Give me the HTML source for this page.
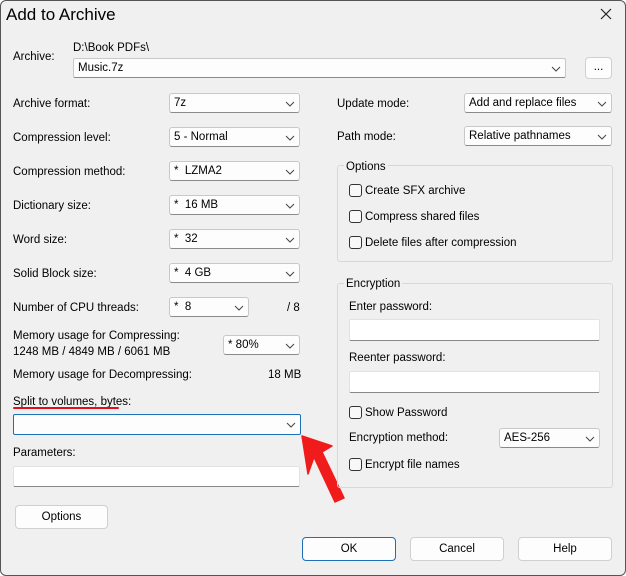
<html><head><style>
body{margin:0;width:626px;height:576px;overflow:hidden;font-family:"Liberation Sans",sans-serif;font-size:11.5px;color:#000}
#w{position:absolute;left:0;top:0;width:624px;height:574px;background:#f0f0f0;border:1px solid #555;border-radius:6px}
.a{position:absolute;white-space:nowrap}
.l{position:absolute;white-space:nowrap;line-height:14px;margin-top:1px}
.c{position:absolute;height:20px;background:#fdfdfd;border:1px solid #c8c8c8;border-bottom-color:#8a8a8a;border-radius:3px;box-sizing:border-box;line-height:19px;padding-left:4px}
.c svg{position:absolute;right:4px;top:7px}
.i{position:absolute;background:#fff;border:1px solid #e2e2e2;border-bottom:1px solid #888;border-radius:2px;box-sizing:border-box}
.b{position:absolute;background:#fdfdfd;border:1px solid #d0d0d0;border-radius:4px;box-sizing:border-box;text-align:center}
.g{position:absolute;border:1px solid #d8d8d8;border-radius:3px;box-sizing:border-box}
.k{position:absolute;width:13px;height:13px;border:1px solid #333;border-radius:3px;box-sizing:border-box;background:#f8f8f8;margin-top:1px}
</style></head><body><div id="w"></div>
<div class="a" style="left:6px;top:5px;font-size:17px">Add to Archive</div>
<svg class="a" style="left:600px;top:8px" width="12" height="12"><path d="M1 1L11 11M11 1L1 11" stroke="#222" stroke-width="1.2"/></svg>
<div class="l" style="left:13px;top:49px">Archive:</div>
<div class="l" style="left:73px;top:40px">D:\Book PDFs\</div>
<div class="c" style="left:73px;top:58px;width:493px;height:20px;border-radius:2px">Music.7z<svg width="10" height="6"><path d="M1 1L5 5L9 1" stroke="#444" fill="none"/></svg></div>
<div class="b" style="left:585px;top:57px;width:27px;height:22px;line-height:18px">...</div>
<div class="l" style="left:13px;top:96px">Archive format:</div>
<div class="l" style="left:13px;top:130px">Compression level:</div>
<div class="l" style="left:13px;top:164px">Compression method:</div>
<div class="l" style="left:13px;top:198px">Dictionary size:</div>
<div class="l" style="left:13px;top:232px">Word size:</div>
<div class="l" style="left:13px;top:266px">Solid Block size:</div>
<div class="l" style="left:13px;top:300px">Number of CPU threads:</div>
<div class="c" style="left:169px;top:93px;width:131px">7z<svg width="10" height="6"><path d="M1 1L5 5L9 1" stroke="#444" fill="none"/></svg></div>
<div class="c" style="left:169px;top:127px;width:131px">5 - Normal<svg width="10" height="6"><path d="M1 1L5 5L9 1" stroke="#444" fill="none"/></svg></div>
<div class="c" style="left:169px;top:161px;width:131px">*&nbsp; LZMA2<svg width="10" height="6"><path d="M1 1L5 5L9 1" stroke="#444" fill="none"/></svg></div>
<div class="c" style="left:169px;top:195px;width:131px">*&nbsp; 16 MB<svg width="10" height="6"><path d="M1 1L5 5L9 1" stroke="#444" fill="none"/></svg></div>
<div class="c" style="left:169px;top:229px;width:131px">*&nbsp; 32<svg width="10" height="6"><path d="M1 1L5 5L9 1" stroke="#444" fill="none"/></svg></div>
<div class="c" style="left:169px;top:263px;width:131px">*&nbsp; 4 GB<svg width="10" height="6"><path d="M1 1L5 5L9 1" stroke="#444" fill="none"/></svg></div>
<div class="c" style="left:169px;top:297px;width:80px">*&nbsp; 8<svg width="10" height="6"><path d="M1 1L5 5L9 1" stroke="#444" fill="none"/></svg></div>
<div class="l" style="left:287px;top:300px">/ 8</div>
<div class="l" style="left:13px;top:328px">Memory usage for Compressing:</div>
<div class="l" style="left:13px;top:344px">1248 MB / 4849 MB / 6061 MB</div>
<div class="c" style="left:223px;top:335px;width:77px">* 80%<svg width="10" height="6"><path d="M1 1L5 5L9 1" stroke="#444" fill="none"/></svg></div>
<div class="l" style="left:13px;top:367px">Memory usage for Decompressing:</div>
<div class="l" style="left:268px;top:367px">18 MB</div>
<div class="l" style="left:13px;top:394px">Split to volumes, bytes:</div>
<div class="a" style="left:13px;top:407px;width:106px;height:2px;background:#e0101a;border-radius:1px"></div>
<div class="c" style="left:13px;top:414px;width:288px;height:21px;border:1px solid #1d6fb8;border-radius:2px"><svg width="10" height="6" style="top:7px"><path d="M1 1L5 5L9 1" stroke="#444" fill="none"/></svg></div>
<div class="l" style="left:13px;top:445px">Parameters:</div>
<div class="i" style="left:13px;top:466px;width:287px;height:21px"></div>
<div class="b" style="left:15px;top:505px;width:93px;height:24px;line-height:22px">Options</div>
<svg class="a" style="left:0;top:0" width="626" height="576"><path d="M302 436L332 446L322 452L344 498L335 502L314 457L308 474Z" fill="#f01c1c" stroke="#f01c1c" stroke-width="1.5" stroke-linejoin="round"/></svg>
<div class="l" style="left:337px;top:96px">Update mode:</div>
<div class="l" style="left:337px;top:129px">Path mode:</div>
<div class="c" style="left:464px;top:93px;width:148px">Add and replace files<svg width="10" height="6"><path d="M1 1L5 5L9 1" stroke="#444" fill="none"/></svg></div>
<div class="c" style="left:464px;top:126px;width:148px">Relative pathnames<svg width="10" height="6"><path d="M1 1L5 5L9 1" stroke="#444" fill="none"/></svg></div>
<div class="g" style="left:337px;top:165px;width:276px;height:97px"></div>
<div class="l" style="left:344px;top:159px;background:#f0f0f0;padding:0 2px">Options</div>
<div class="k" style="left:349px;top:183px"></div><div class="l" style="left:365px;top:183px">Create SFX archive</div>
<div class="k" style="left:349px;top:209px"></div><div class="l" style="left:365px;top:209px">Compress shared files</div>
<div class="k" style="left:349px;top:235px"></div><div class="l" style="left:365px;top:235px">Delete files after compression</div>
<div class="g" style="left:337px;top:283px;width:276px;height:205px"></div>
<div class="l" style="left:344px;top:276px;background:#f0f0f0;padding:0 2px">Encryption</div>
<div class="l" style="left:349px;top:299px">Enter password:</div>
<div class="i" style="left:349px;top:319px;width:251px;height:22px"></div>
<div class="l" style="left:349px;top:350px">Reenter password:</div>
<div class="i" style="left:349px;top:371px;width:251px;height:22px"></div>
<div class="k" style="left:349px;top:405px"></div><div class="l" style="left:365px;top:405px">Show Password</div>
<div class="l" style="left:349px;top:430px">Encryption method:</div>
<div class="c" style="left:499px;top:428px;width:101px">AES-256<svg width="10" height="6"><path d="M1 1L5 5L9 1" stroke="#444" fill="none"/></svg></div>
<div class="k" style="left:349px;top:457px"></div><div class="l" style="left:365px;top:457px">Encrypt file names</div>
<div class="b" style="left:302px;top:537px;width:94px;height:24px;line-height:22px;border-color:#1d6fb8">OK</div>
<div class="b" style="left:410px;top:537px;width:94px;height:24px;line-height:22px">Cancel</div>
<div class="b" style="left:518px;top:537px;width:94px;height:24px;line-height:22px">Help</div>
</body></html>
